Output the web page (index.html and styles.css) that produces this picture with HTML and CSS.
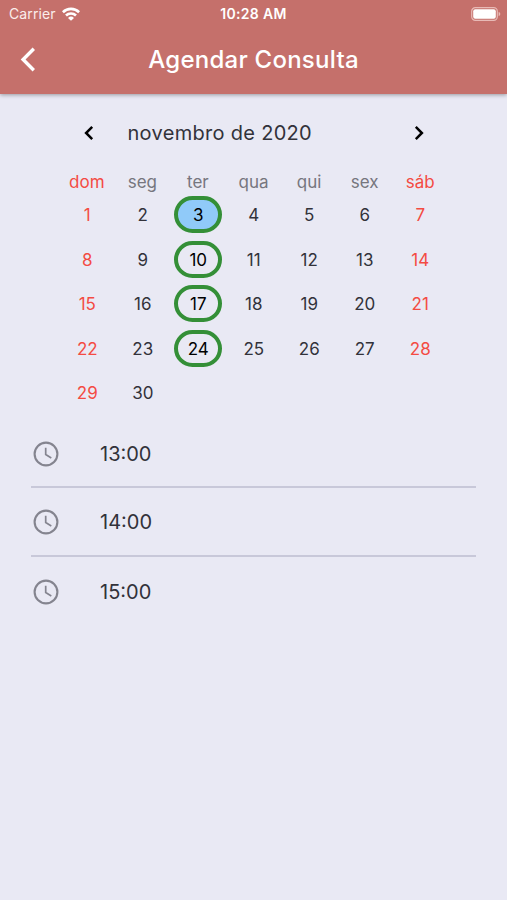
FILE: index.html
```html
<!DOCTYPE html>
<html lang="pt-BR">
<head>
    <meta charset="UTF-8">
    <meta name="viewport" content="width=device-width, initial-scale=1.0">
    <title>Agendar Consulta</title>
    <link rel="stylesheet" href="styles.css">
</head>
<body>
    <header class="header">
        <div class="status">
            <div class="carrier">
                <span>Carrier</span>
                <svg class="wifi" viewBox="0 0 18 14" fill="none" stroke="#fff" stroke-width="2.6">
                    <path d="M0.9 5.2a11.6 11.6 0 0 1 16.2 0"/>
                    <path d="M4 8.5a7.1 7.1 0 0 1 10 0"/>
                    <path d="M9 13.8L6 10.9a4.3 4.3 0 0 1 6 0z" fill="#fff" stroke="none"/>
                </svg>
            </div>
            <span class="clock">10:28 AM</span>
            <svg class="battery" viewBox="0 0 30 14">
                <rect x="0.7" y="0.7" width="25.6" height="12.6" rx="3.6" fill="none" stroke="#e8bab6" stroke-width="1.2"/>
                <rect x="2.2" y="2.3" width="22.6" height="9.4" rx="2" fill="#fff"/>
                <path d="M27.6 5v4c1.2-.4 1.7-1.2 1.7-2s-.5-1.6-1.7-2z" fill="#e8bab6"/>
            </svg>
        </div>
        <div class="navbar">
            <svg class="back" viewBox="0 0 16 26" fill="none" stroke="#fff" stroke-width="3.4">
                <path d="M13.8 1.8L3.1 12.5l10.7 10.7"/>
            </svg>
            <h1>Agendar Consulta</h1>
        </div>
    </header>

    <main>
        <div class="month">
            <svg class="arrow" viewBox="0 0 10 16" fill="none" stroke="#000" stroke-width="2.5">
                <path d="M8.2 1.9L2.1 8l6.1 6.1"/>
            </svg>
            <h2>novembro de 2020</h2>
            <svg class="arrow" viewBox="0 0 10 16" fill="none" stroke="#000" stroke-width="2.5">
                <path d="M1.8 1.9L7.9 8l-6.1 6.1"/>
            </svg>
        </div>

        <div class="week names">
            <span class="weekend">dom</span>
            <span>seg</span>
            <span>ter</span>
            <span>qua</span>
            <span>qui</span>
            <span>sex</span>
            <span class="weekend">sáb</span>
        </div>
        <div class="week days">
            <span class="weekend">1</span>
            <span>2</span>
            <span class="open selected">3</span>
            <span>4</span>
            <span>5</span>
            <span>6</span>
            <span class="weekend">7</span>
            <span class="weekend">8</span>
            <span>9</span>
            <span class="open">10</span>
            <span>11</span>
            <span>12</span>
            <span>13</span>
            <span class="weekend">14</span>
            <span class="weekend">15</span>
            <span>16</span>
            <span class="open">17</span>
            <span>18</span>
            <span>19</span>
            <span>20</span>
            <span class="weekend">21</span>
            <span class="weekend">22</span>
            <span>23</span>
            <span class="open">24</span>
            <span>25</span>
            <span>26</span>
            <span>27</span>
            <span class="weekend">28</span>
            <span class="weekend">29</span>
            <span>30</span>
        </div>

        <ul class="times">
            <li>
                <svg viewBox="0 0 26 26" fill="none" stroke="#84848f">
                    <circle cx="13" cy="13" r="11.4" stroke-width="2.1"/>
                    <path d="M12.7 6.8v6.8l5.6 3.3" stroke-width="1.7"/>
                </svg>
                <span>13:00</span>
            </li>
            <li>
                <svg viewBox="0 0 26 26" fill="none" stroke="#84848f">
                    <circle cx="13" cy="13" r="11.4" stroke-width="2.1"/>
                    <path d="M12.7 6.8v6.8l5.6 3.3" stroke-width="1.7"/>
                </svg>
                <span>14:00</span>
            </li>
            <li>
                <svg viewBox="0 0 26 26" fill="none" stroke="#84848f">
                    <circle cx="13" cy="13" r="11.4" stroke-width="2.1"/>
                    <path d="M12.7 6.8v6.8l5.6 3.3" stroke-width="1.7"/>
                </svg>
                <span>15:00</span>
            </li>
        </ul>
    </main>
</body>
</html>
```

FILE: styles.css
```css
* {
    box-sizing: border-box;
}
body {
    margin: 0;
    min-height: 900px;
    background-color: #E9E9F4;
    color: #32323A;
    font-family: Inter, "Liberation Sans", sans-serif;
}
h1, h2, ul {
    margin: 0;
    padding: 0;
}
.header {
    height: 93.5px;
    background-color: #C5706B;
    color: white;
    box-shadow: 0 1px 4px rgba(0, 0, 0, 0.35);
}

/* status bar */
.status {
    display: grid;
    grid-template-columns: 1fr auto 1fr;
    align-items: center;
    height: 27px;
    padding: 0 6px;
    font-size: 14px;
}
.carrier {
    display: flex;
    align-items: center;
    gap: 6px;
    padding-left: 3px;
    color: #FBEDEB;
    letter-spacing: 0.1px;
}
.wifi {
    width: 18px;
    height: 14px;
}
.clock {
    font-weight: 600;
    font-size: 14px;
    letter-spacing: 0.35px;
}
.battery {
    width: 30px;
    height: 14px;
    justify-self: end;
}

.navbar {
    display: grid;
    grid-template-columns: 60px 1fr 60px;
    align-items: center;
    height: 66px;
}
.back {
    width: 16px;
    height: 26px;
    margin-left: 20px;
}
h1 {
    padding-bottom: 1px;
    font-size: 24px;
    font-weight: 500;
    letter-spacing: 0.25px;
    text-align: center;
}

/* calendar */
.month {
    display: flex;
    align-items: center;
    width: 340px;
    height: 30px;
    margin: 24.5px auto 0;
}
.month h2 {
    flex: 1;
    margin-left: 34px;
    font-size: 20px;
    font-weight: 400;
    letter-spacing: 0.3px;
}
.arrow {
    width: 10px;
    height: 16px;
}
.week {
    display: grid;
    grid-template-columns: repeat(7, 1fr);
    width: 389px;
    margin: 0 auto;
    text-align: center;
}
.names {
    margin-top: 23px;
    line-height: 23px;
    font-size: 17px;
    color: #76767E;
}
.days {
    grid-auto-rows: 37px;
    row-gap: 7.5px;
    margin-top: 2px;
    padding-left: 0.5px;
    line-height: 38px;
    font-size: 17px;
}
.week .weekend {
    color: #F44B43;
}
.open {
    width: 48px;
    justify-self: center;
    border: 4px solid #348F37;
    border-radius: 19px;
    line-height: 30px;
    color: #000;
}
.selected {
    background-color: #90CAF9;
}

/* available hours */
.times {
    margin: 9px 31px 0;
    list-style: none;
}
.times li {
    display: flex;
    align-items: center;
    gap: 41px;
    height: 68.3px;
    padding: 2px 0 0 2px;
    border-bottom: 2px solid #C8C8D9;
    font-size: 20px;
}
.times li:last-child {
    border-bottom: none;
}
.times svg {
    width: 26px;
    height: 26px;
}
```
